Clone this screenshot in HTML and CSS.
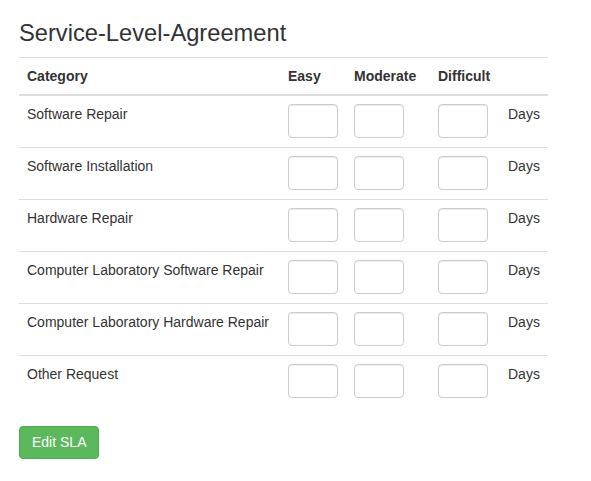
FILE: index.html
```html
<!DOCTYPE html>
<html>
<head>
<meta charset="utf-8">
<link rel="stylesheet" href="styles.css">
</head>
<body>
<div class="page">
  <h3 class="title">Service-Level-Agreement</h3>
  <table class="sla">
    <colgroup>
      <col class="c-cat"><col class="c-easy"><col class="c-mod"><col class="c-diff"><col class="c-days">
    </colgroup>
    <thead>
      <tr><th>Category</th><th>Easy</th><th>Moderate</th><th>Difficult</th><th></th></tr>
    </thead>
    <tbody>
      <tr><td>Software Repair</td><td><input class="box" type="text"></td><td><input class="box" type="text"></td><td><input class="box" type="text"></td><td>Days</td></tr>
      <tr><td>Software Installation</td><td><input class="box" type="text"></td><td><input class="box" type="text"></td><td><input class="box" type="text"></td><td>Days</td></tr>
      <tr><td>Hardware Repair</td><td><input class="box" type="text"></td><td><input class="box" type="text"></td><td><input class="box" type="text"></td><td>Days</td></tr>
      <tr><td>Computer Laboratory Software Repair</td><td><input class="box" type="text"></td><td><input class="box" type="text"></td><td><input class="box" type="text"></td><td>Days</td></tr>
      <tr><td>Computer Laboratory Hardware Repair</td><td><input class="box" type="text"></td><td><input class="box" type="text"></td><td><input class="box" type="text"></td><td>Days</td></tr>
      <tr><td>Other Request</td><td><input class="box" type="text"></td><td><input class="box" type="text"></td><td><input class="box" type="text"></td><td>Days</td></tr>
    </tbody>
  </table>
  <button class="btn-edit" type="button">Edit SLA</button>
</div>
</body>
</html>
```
FILE: styles.css
```css
html, body {
  margin: 0;
  padding: 0;
  background: #fff;
}
body {
  font-family: "Liberation Sans", Arial, sans-serif;
  font-size: 14px;
  line-height: 20px;
  color: #333;
}
.page {
  width: 529px;
  padding: 0 19px;
}
.title {
  margin: 20px 0 11px;
  font-size: 23.7px;
  font-weight: 400;
  line-height: 26px;
  color: #333;
}
.sla {
  width: 529px;
  table-layout: fixed;
  border-collapse: collapse;
  border-spacing: 0;
  margin: 0 0 19px;
  border-top: 1px solid #ddd;
}
.c-cat { width: 261px; }
.c-easy { width: 66px; }
.c-mod { width: 84px; }
.c-diff { width: 70px; }
.c-days { width: 48px; }
.sla th {
  text-align: left;
  font-weight: 700;
  padding: 8px;
  vertical-align: bottom;
  border-bottom: 2px solid #ddd;
  white-space: nowrap;
}
.sla td {
  padding: 8px 8px 9px;
  vertical-align: top;
  border-top: 1px solid #ddd;
  white-space: nowrap;
}
.sla tbody tr:first-child td {
  border-top: 0;
}
.box {
  display: block;
  box-sizing: border-box;
  width: 50px;
  height: 34px;
  margin: 0;
  padding: 6px 12px;
  border: 1px solid #ccc;
  border-radius: 4px;
  background: #fff;
  box-shadow: inset 0 1px 1px rgba(0,0,0,.075);
  font: inherit;
}
.btn-edit {
  display: inline-block;
  box-sizing: border-box;
  height: 33px;
  padding: 6px 12px;
  border: 1px solid #4cae4c;
  border-radius: 4px;
  background: #5cb85c;
  color: #fff;
  font-family: "Liberation Sans", Arial, sans-serif;
  font-size: 14px;
  line-height: 19px;
  cursor: pointer;
}
```
